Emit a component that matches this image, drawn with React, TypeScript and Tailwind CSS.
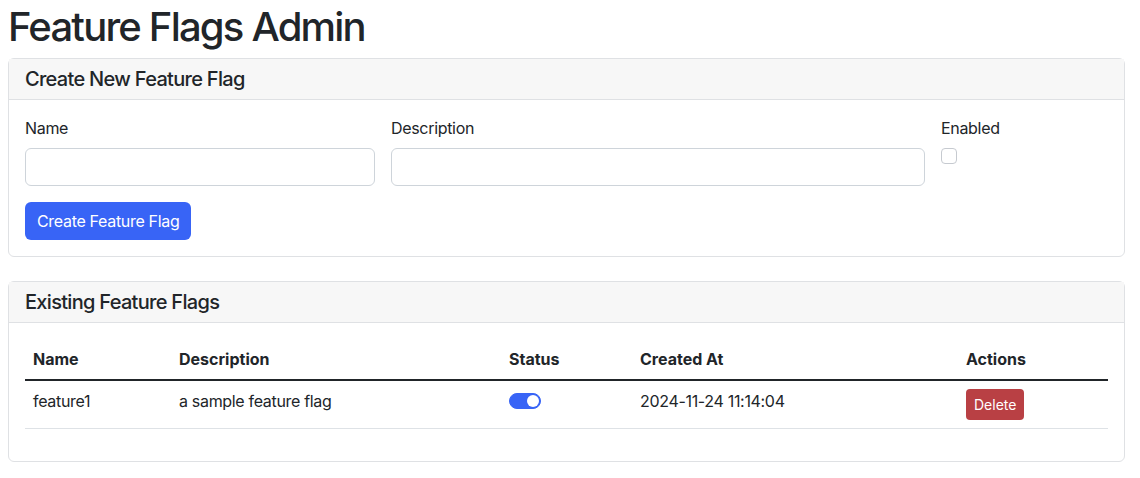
import React, { useState } from 'react';

type Flag = {
  id: number;
  name: string;
  description: string;
  enabled: boolean;
  createdAt: string;
};

const initialFlags: Flag[] = [
  { id: 1, name: 'feature1', description: 'a sample feature flag', enabled: true, createdAt: '2024-11-24 11:14:04' },
];

const Toggle: React.FC<{ on: boolean; onChange: () => void }> = ({ on, onChange }) => (
  <button
    type="button"
    onClick={onChange}
    className={`relative mt-[4px] block h-4 w-8 rounded-full border ${
      on ? 'border-[#3864f6] bg-[#3864f6]' : 'border-[#c6cad0] bg-white'
    }`}
  >
    <span
      className={`absolute top-[1px] h-3 w-3 rounded-full ${on ? 'right-[1px] bg-white' : 'left-[1px] bg-[#c6cad0]'}`}
    />
  </button>
);

export default function App() {
  const [flags, setFlags] = useState<Flag[]>(initialFlags);
  const [name, setName] = useState('');
  const [description, setDescription] = useState('');
  const [enabled, setEnabled] = useState(false);

  const handleCreate = () => {
    if (!name.trim()) return;
    setFlags(prev => [
      ...prev,
      { id: Date.now(), name, description, enabled, createdAt: new Date().toISOString().slice(0, 19).replace('T', ' ') },
    ]);
    setName('');
    setDescription('');
    setEnabled(false);
  };

  return (
    <div className="min-h-screen bg-white pl-2 pr-[15px] text-[#212529]" style={{ fontFamily: 'Inter, "Noto Sans", sans-serif' }}>
      <h1 className="mb-[7px] pt-[3px] text-[40px] font-medium leading-[48px] tracking-[-0.045em]">Feature Flags Admin</h1>

      <div className="rounded-md border border-[#dfe1e4]">
        <div className="border-b border-[#dfe1e4] bg-[#f7f7f7] px-4 py-2">
          <h5 className="text-[20px] font-medium leading-6 tracking-[-0.035em]">Create New Feature Flag</h5>
        </div>
        <div className="p-4 tracking-[-0.02em]">
          <div className="mb-4 grid grid-cols-[350px_534px_1fr] gap-4">
            <div>
              <label className="mb-2 block text-base leading-6">Name</label>
              <input
                value={name}
                onChange={e => setName(e.target.value)}
                className="block h-[38px] w-full rounded-md border border-[#ced4da] px-3 outline-none"
              />
            </div>
            <div>
              <label className="mb-2 block text-base leading-6">Description</label>
              <input
                value={description}
                onChange={e => setDescription(e.target.value)}
                className="block h-[38px] w-full rounded-md border border-[#ced4da] px-3 outline-none"
              />
            </div>
            <div>
              <label className="mb-2 block text-base leading-6">Enabled</label>
              <input
                type="checkbox"
                checked={enabled}
                onChange={e => setEnabled(e.target.checked)}
                className="mt-1 block h-4 w-4 appearance-none rounded-[4px] border border-[#c6cad0] bg-white checked:border-[#3864f6] checked:bg-[#3864f6]"
              />
            </div>
          </div>
          <button
            type="button"
            onClick={handleCreate}
            className="h-[38px] rounded-md bg-[#3864f6] px-3 text-base leading-6 text-white"
          >
            Create Feature Flag
          </button>
        </div>
      </div>

      <div className="mt-6 rounded-md border border-[#dfe1e4]">
        <div className="border-b border-[#dfe1e4] bg-[#f7f7f7] px-4 py-2">
          <h5 className="text-[20px] font-medium leading-6 tracking-[-0.035em]">Existing Feature Flags</h5>
        </div>
        <div className="p-4">
          <table className="mb-4 w-full border-collapse text-left text-base">
            <thead>
              <tr className="border-b-2 border-[#212529]">
                <th className="w-[146px] p-2 font-bold leading-6">Name</th>
                <th className="w-[330px] p-2 font-bold leading-6">Description</th>
                <th className="w-[131px] p-2 font-bold leading-6">Status</th>
                <th className="w-[326px] p-2 font-bold leading-6">Created At</th>
                <th className="p-2 font-bold leading-6">Actions</th>
              </tr>
            </thead>
            <tbody className="tracking-[-0.02em]">
              {flags.map(flag => (
                <tr key={flag.id} className="border-b border-[#dee2e6]">
                  <td className="p-2 align-top leading-6">{flag.name}</td>
                  <td className="p-2 align-top leading-6">{flag.description}</td>
                  <td className="p-2 align-top leading-6">
                    <Toggle
                      on={flag.enabled}
                      onChange={() =>
                        setFlags(prev => prev.map(f => (f.id === flag.id ? { ...f, enabled: !f.enabled } : f)))
                      }
                    />
                  </td>
                  <td className="p-2 align-top leading-6">{flag.createdAt}</td>
                  <td className="p-2 align-top leading-6">
                    <button
                      type="button"
                      onClick={() => setFlags(prev => prev.filter(f => f.id !== flag.id))}
                      className="h-[31px] rounded-[4px] bg-[#b94044] px-2 text-sm tracking-normal text-white"
                    >
                      Delete
                    </button>
                  </td>
                </tr>
              ))}
            </tbody>
          </table>
        </div>
      </div>
    </div>
  );
}
